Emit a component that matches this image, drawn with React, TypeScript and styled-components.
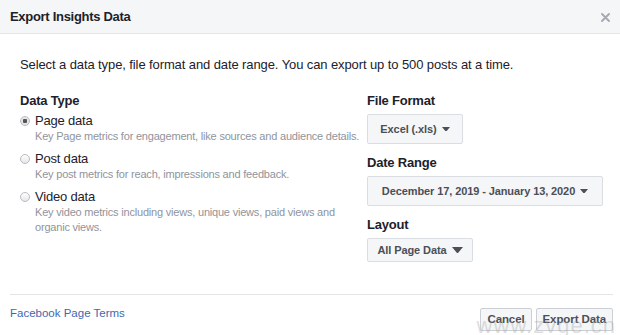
import styled, { createGlobalStyle } from 'styled-components';

const GlobalStyle = createGlobalStyle`
    html, body {
        margin: 0;
        padding: 0;
        background: #ffffff;
    }

    body {
        font-family: 'Liberation Sans', Arial, sans-serif;
        color: #1d2129;
    }
`;

type Option = {
    label: string;
    description: string;
    checked?: boolean;
};

const dataTypes: Option[] = [
    {
        label: 'Page data',
        description: 'Key Page metrics for engagement, like sources and audience details.',
        checked: true,
    },
    {
        label: 'Post data',
        description: 'Key post metrics for reach, impressions and feedback.',
    },
    {
        label: 'Video data',
        description:
            'Key video metrics including views, unique views, paid views and organic views.',
    },
];

const Caret = ({ size }: { size: number }) => (
    <svg width={size} height={size * 0.6} viewBox='0 0 10 6'>
        <path d='M0 0 L10 0 L5 6 Z' fill='#4b4f56' />
    </svg>
);

export default function App() {
    return (
        <>
            <GlobalStyle />
            <Dialog>
                <Header>
                    <Title>Export Insights Data</Title>
                    <Close>
                        <svg width='9' height='9' viewBox='0 0 9 9'>
                            <path
                                d='M1 1 L8 8 M8 1 L1 8'
                                stroke='#a4a8ae'
                                strokeWidth='1.8'
                                strokeLinecap='round'
                            />
                        </svg>
                    </Close>
                </Header>
                <Body>
                    <Intro>
                        Select a data type, file format and date range. You can export up to
                        500 posts at a time.
                    </Intro>
                    <Columns>
                        <Column>
                            <Label>Data Type</Label>
                            <Options>
                                {dataTypes.map((option) => (
                                    <OptionRow key={option.label}>
                                        <Radio checked={!!option.checked} />
                                        <OptionText>
                                            <OptionLabel>{option.label}</OptionLabel>
                                            <OptionDescription>
                                                {option.description}
                                            </OptionDescription>
                                        </OptionText>
                                    </OptionRow>
                                ))}
                            </Options>
                        </Column>
                        <Column>
                            <Field>
                                <Label>File Format</Label>
                                <Select width={96} height={30}>
                                    Excel (.xls) <Caret size={8} />
                                </Select>
                            </Field>
                            <Field>
                                <Label>Date Range</Label>
                                <Select width={236} height={30}>
                                    December 17, 2019 - January 13, 2020 <Caret size={8} />
                                </Select>
                            </Field>
                            <Field>
                                <Label>Layout</Label>
                                <Select width={106} height={24}>
                                    All Page Data <Caret size={11} />
                                </Select>
                            </Field>
                        </Column>
                    </Columns>
                </Body>
                <Footer>
                    <TermsLink href='#'>Facebook Page Terms</TermsLink>
                    <Buttons>
                        <Button>Cancel</Button>
                        <Button>Export Data</Button>
                    </Buttons>
                </Footer>
                <Watermark>www.zvge.cn</Watermark>
            </Dialog>
        </>
    );
}

const Dialog = styled.div`
    position: relative;
    width: 620px;
    height: 335px;
    display: flex;
    flex-direction: column;
    background: #ffffff;
    overflow: hidden;
`;

const Header = styled.div`
    height: 33px;
    flex-shrink: 0;
    display: flex;
    align-items: center;
    justify-content: space-between;
    padding: 0 10px;
    background: #f5f6f7;
    border-bottom: 1px solid #e5e5e5;
`;

const Title = styled.h1`
    margin: 0;
    font-size: 13px;
    letter-spacing: -0.3px;
    font-weight: bold;
    color: #1d2129;
`;

const Close = styled.span`
    display: flex;
    align-items: center;
    padding-top: 2px;
`;

const Body = styled.div`
    flex: 1;
    padding: 0 20px;
`;

const Intro = styled.p`
    margin: 22px 0 0;
    font-size: 13px;
    letter-spacing: -0.1px;
    line-height: 18px;
    color: #1d2129;
`;

const Columns = styled.div`
    display: grid;
    grid-template-columns: 347px 1fr;
    margin-top: 18px;
`;

const Column = styled.div`
    display: flex;
    flex-direction: column;
`;

const Label = styled.div`
    font-size: 13px;
    letter-spacing: -0.2px;
    line-height: 18px;
    font-weight: 600;
    color: #1d2129;
`;

const Options = styled.div`
    display: flex;
    flex-direction: column;
    gap: 7px;
    margin-top: 3px;
`;

const OptionRow = styled.div`
    display: flex;
    align-items: flex-start;
    gap: 5px;
`;

const Radio = styled.span<{ checked: boolean }>`
    width: 10px;
    height: 10px;
    margin-top: 3px;
    flex-shrink: 0;
    border-radius: 50%;
    box-sizing: border-box;
    border: 1px solid #b9bcc1;
    background: ${({ checked }) =>
        checked
            ? 'radial-gradient(circle, #555 0 2px, #e4e5e7 2.5px)'
            : 'linear-gradient(#fdfdfd, #e6e7e9)'};
`;

const OptionText = styled.div`
    display: flex;
    flex-direction: column;
`;

const OptionLabel = styled.span`
    font-size: 13px;
    letter-spacing: -0.2px;
    line-height: 16px;
    color: #1d2129;
`;

const OptionDescription = styled.span`
    max-width: 328px;
    font-size: 11px;
    letter-spacing: -0.2px;
    line-height: 15px;
    color: #90949c;
`;

const Field = styled.div`
    display: flex;
    flex-direction: column;
    gap: 4px;
    margin-bottom: 10px;
`;

const Select = styled.div<{ width: number; height: number }>`
    width: ${({ width }) => width}px;
    height: ${({ height }) => height}px;
    box-sizing: border-box;
    display: flex;
    align-items: center;
    justify-content: center;
    gap: 5px;
    background: #f5f6f7;
    border: 1px solid #dadde1;
    border-radius: 2px;
    font-size: 11px;
    letter-spacing: -0.1px;
    font-weight: bold;
    color: #4b4f56;
`;

const Footer = styled.div`
    flex-shrink: 0;
    height: 40px;
    margin: 0 7px 0 10px;
    border-top: 1px solid #e5e5e5;
    display: flex;
    align-items: center;
    justify-content: space-between;
`;

const TermsLink = styled.a`
    font-size: 11.5px;
    color: #4267b2;
    text-decoration: none;
    margin-top: -4px;
`;

const Buttons = styled.div`
    display: flex;
    gap: 4px;
    margin-top: 8px;
`;

const Button = styled.button`
    height: 23px;
    padding: 0 6px;
    background: #f5f6f7;
    border: 1px solid #ccd0d5;
    border-radius: 2px;
    font-family: 'Liberation Sans', Arial, sans-serif;
    font-size: 11.5px;
    letter-spacing: -0.1px;
    font-weight: bold;
    color: #4b4f56;
`;

const Watermark = styled.span`
    position: absolute;
    right: 4px;
    bottom: -4px;
    font-family: 'Liberation Sans', Arial, sans-serif;
    font-size: 22px;
    letter-spacing: 1px;
    color: rgba(160, 160, 160, 0.35);
    pointer-events: none;
`;
